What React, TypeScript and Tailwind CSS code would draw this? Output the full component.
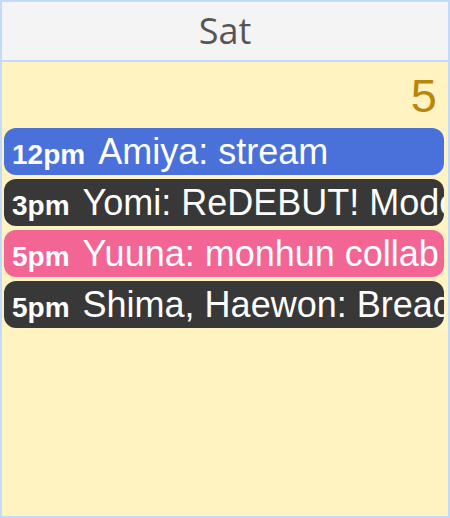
import React from "react";

const events = [
  { time: "12pm", title: "Amiya: stream", bg: "bg-[#4a70d9]" },
  { time: "3pm", title: "Yomi: ReDEBUT! Model reveal", bg: "bg-[#383838]" },
  { time: "5pm", title: "Yuuna: monhun collab", bg: "bg-[#f26594]" },
  { time: "5pm", title: "Shima, Haewon: Bread baking", bg: "bg-[#383838]" },
];

export default function App() {
  return (
    <div className="w-[450px] h-[518px] border-2 border-[#c4d9fe] flex flex-col overflow-hidden">
      <div className="h-[60px] shrink-0 bg-[#f4f4f4] border-b-2 border-[#c4d9fe] flex items-center justify-center">
        <span
          className="text-[36px] text-[#555555] leading-none"
          style={{ fontFamily: '"Open Sans", "Noto Sans", sans-serif' }}
        >
          Sat
        </span>
      </div>
      <div
        className="flex-1 bg-[#fff3c1] flex flex-col"
        style={{ fontFamily: '"Liberation Sans", Arial, sans-serif' }}
      >
        <div className="text-right pr-[11px] pt-[10px] text-[47px] leading-none text-[#b8860b]">5</div>
        <div className="mt-[9px] pl-[2px] pr-[4px] flex flex-col gap-[4px]">
          {events.map((e, i) => (
            <div
              key={i}
              className={`${e.bg} h-[47px] rounded-[12px] pl-[8px] flex items-center overflow-hidden whitespace-nowrap text-white`}
            >
              <div className="flex items-baseline">
                <span className="text-[28px] font-bold mr-[13px]">{e.time}</span>
                <span className="text-[36px]">{e.title}</span>
              </div>
            </div>
          ))}
        </div>
      </div>
    </div>
  );
}
